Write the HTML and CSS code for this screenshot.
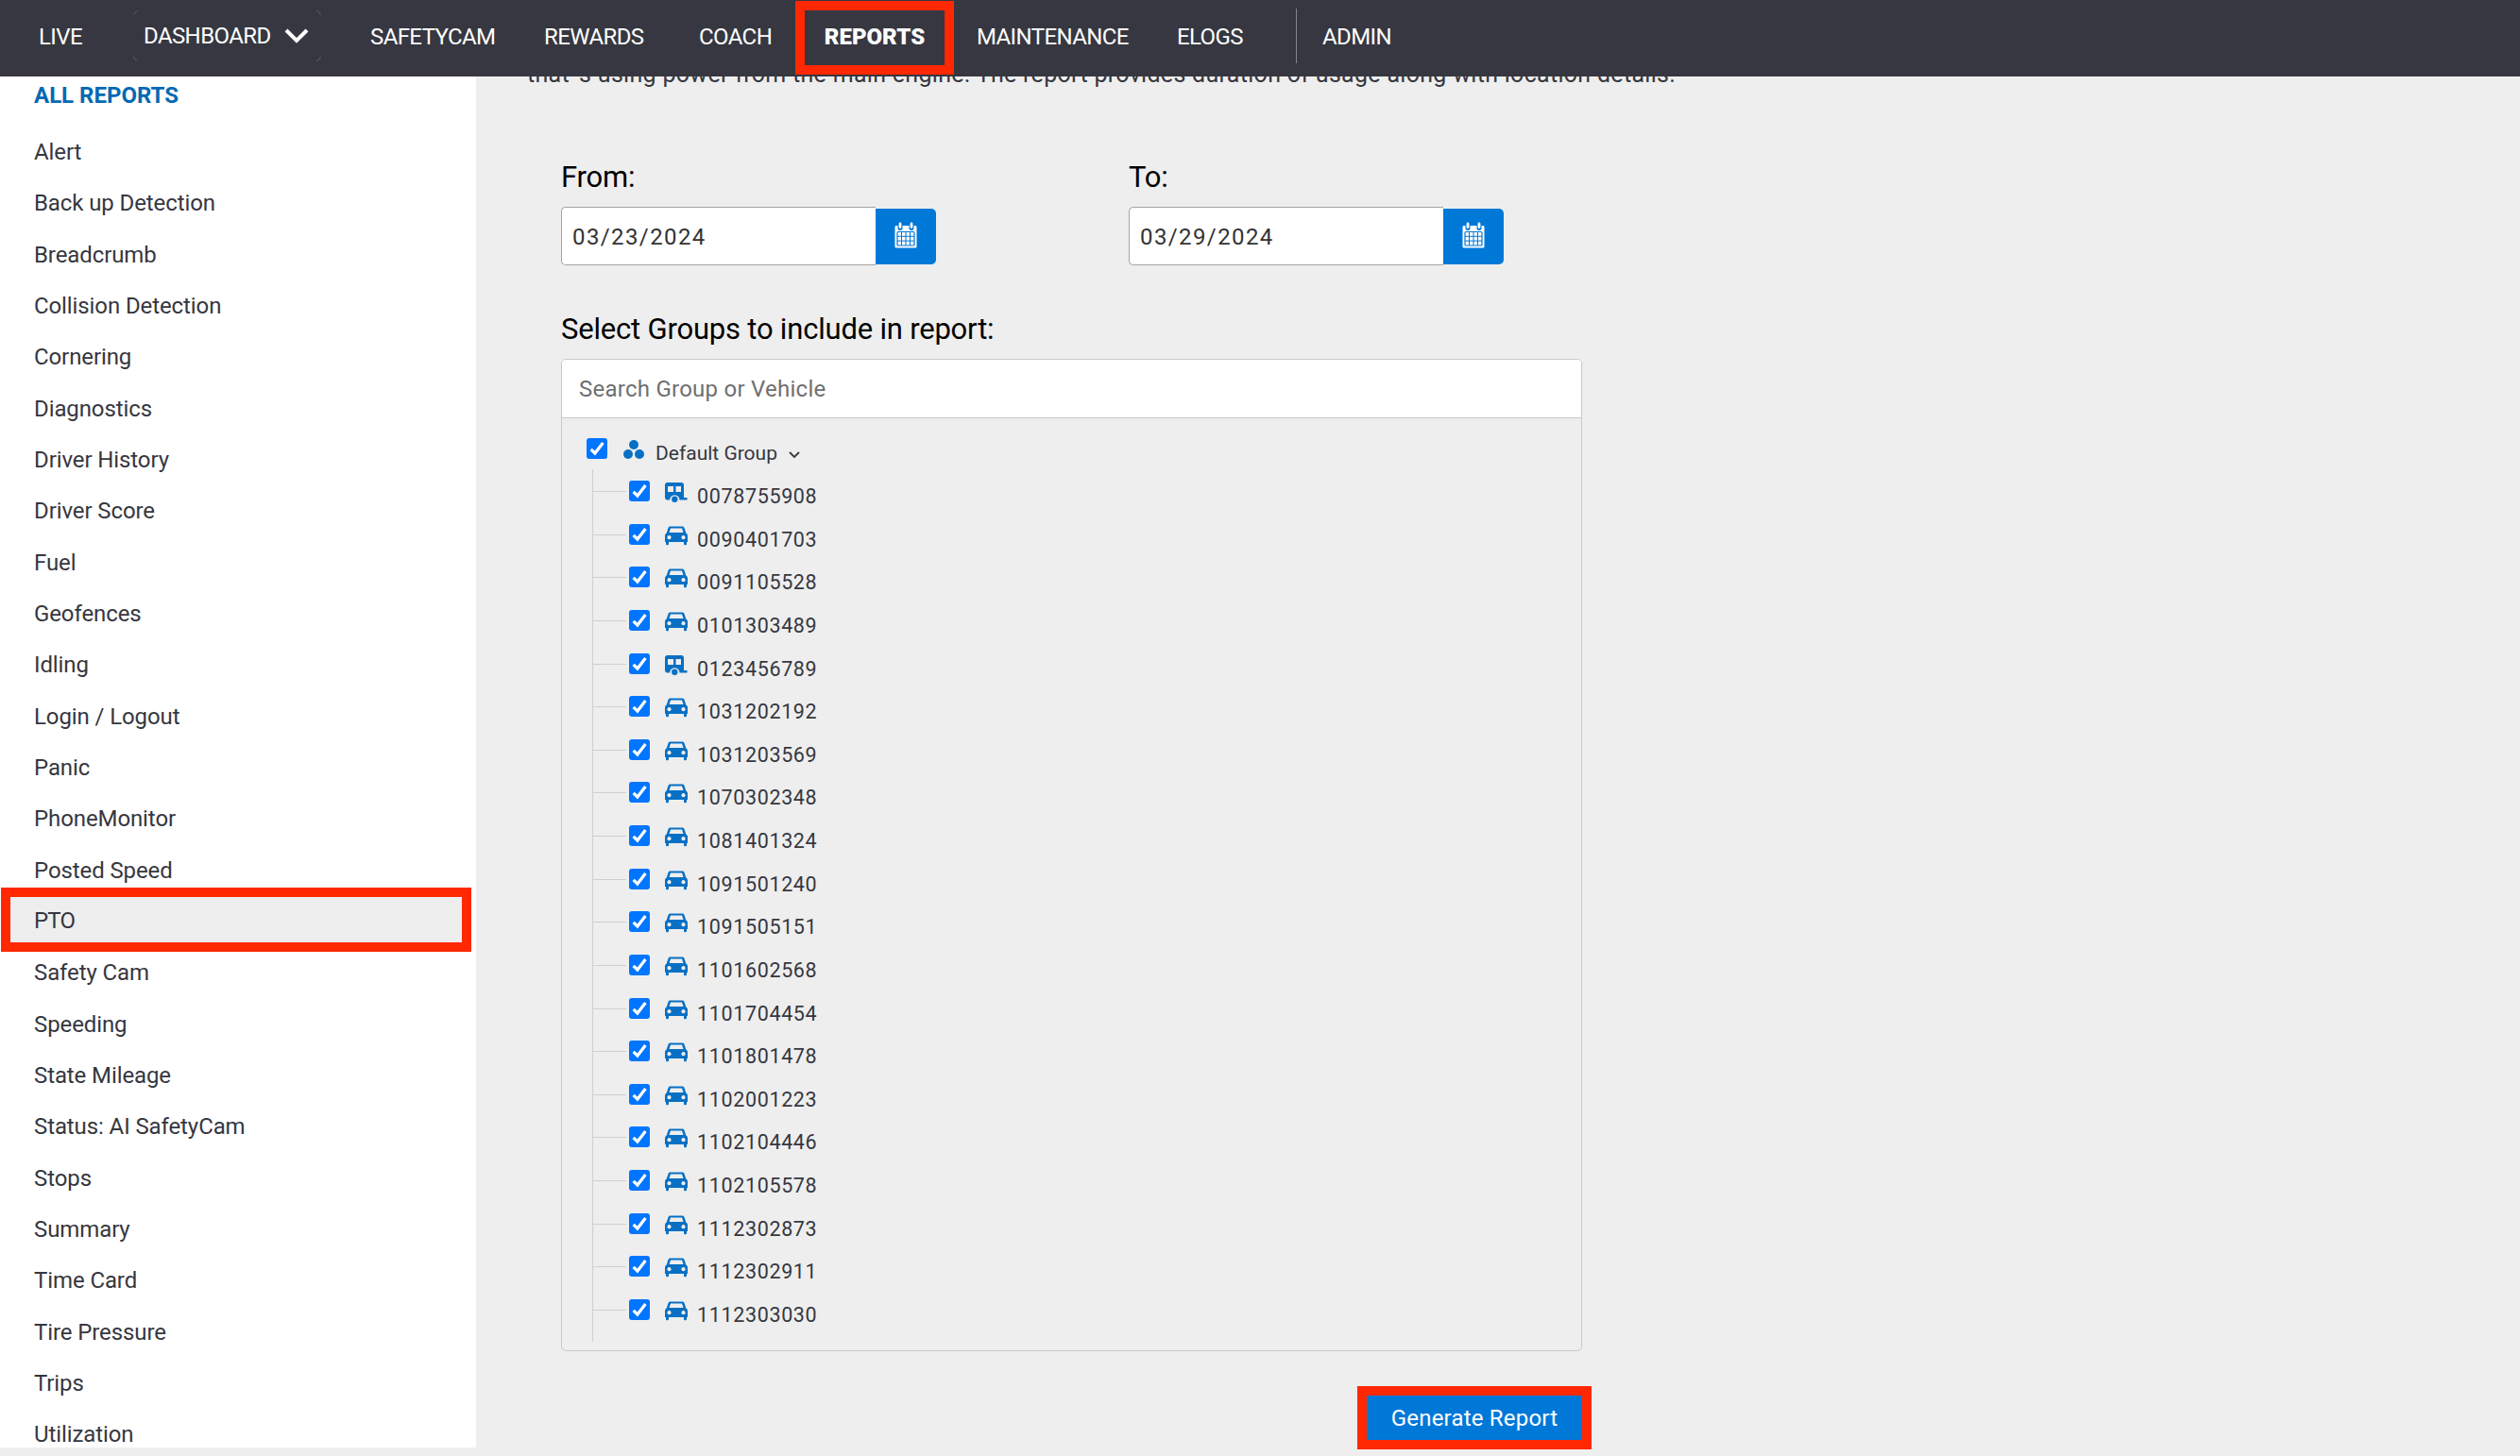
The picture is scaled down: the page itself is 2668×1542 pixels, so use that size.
FILE: index.html
```html
<!DOCTYPE html>
<html lang="en">

<head>
    <meta charset="UTF-8">
    <meta name="viewport" content="width=device-width, initial-scale=1.0">
    <title>Reports - PTO</title>
    <link rel="stylesheet" href="styles.css">
</head>

<body>
    <!-- Icons -->
    <svg class="sprite" width="0" height="0">
        <symbol id="check" viewBox="0 0 22 22">
            <rect width="22" height="22" rx="3" fill="#0075ff" />
            <path d="M4.6 11.8l4.3 4.2L17.4 5" fill="none" stroke="#fff" stroke-width="3.2" />
        </symbol>
        <symbol id="car" viewBox="0 0 24 20">
            <path fill-rule="evenodd" d="M5.6 0h12.8c1 0 1.8.6 2.1 1.5L22.3 7c1 .7 1.7 1.7 1.7 3v6.6h-1v1.6c0 1-.6 1.6-1.5 1.6S20 19.200 20 18.200v-1.600H4v1.600c0 1-.6 1.600-1.500 1.600S1 19.200 1 18.200v-1.600H0V10c0-1.300.7-2.300 1.700-3l1.800-5.500C3.800.6 4.600 0 5.600 0zM6 2L4.500 6.600h15L18 2zM4.500 9.600a2.100 2.100 0 1 0 .01 0zM19.500 9.600a2.100 2.100 0 1 0 .01 0z" />
        </symbol>
        <symbol id="trailer" viewBox="0 0 24 21">
            <path fill-rule="evenodd" d="M2.500 0h15C19 0 20 1 20 2.500V16h3.500v2.500h-8a5.200 5.200 0 0 0-10.400 0H2.500C1 18.500 0 17.500 0 16V2.500C0 1 1 0 2.500 0zM3 4v6h6V4zM11.500 4v6H17V4z" />
            <circle cx="10.300" cy="17.700" r="3.200" />
        </symbol>
        <symbol id="group" viewBox="0 0 22 20">
            <circle cx="11" cy="5" r="5" />
            <circle cx="5" cy="15" r="5" />
            <circle cx="17" cy="15" r="5" />
        </symbol>
        <symbol id="calendar" viewBox="0 0 24 28">
            <path fill="#fff" d="M2 4h20c1 0 1.500.6 1.500 1.500V26c0 1-.5 1.500-1.500 1.500H2c-1 0-1.500-.5-1.500-1.500V5.500C.5 4.600 1 4 2 4z" />
            <rect x="3" y="10.500" width="18" height="14.500" rx="1" fill="none" stroke="#0078d8" stroke-width="1.200" />
            <path d="M7.500 10.500V25M12 10.500V25M16.500 10.500V25M3 15.300h18M3 20.100h18" stroke="#0078d8" />
            <path d="M6 2v4.500M18 2v4.500" stroke="#0078d8" stroke-width="5" stroke-linecap="round" />
            <path d="M6 2v3.500M18 2v3.500" stroke="#fff" stroke-width="2.800" stroke-linecap="round" />
        </symbol>
    </svg>

    <!-- Navigation -->
    <header>
        <nav class="nav-links">
            <a>LIVE</a>
            <a class="dropdown">DASHBOARD
                <svg class="arrow" viewBox="0 0 26 16"><path d="M2 2l11 11L24 2" /></svg>
            </a>
            <a>SAFETYCAM</a>
            <a>REWARDS</a>
            <a>COACH</a>
            <a class="active">REPORTS</a>
            <a>MAINTENANCE</a>
            <a>ELOGS</a>
            <a class="admin">ADMIN</a>
        </nav>
    </header>

    <div class="page">
        <!-- Report list -->
        <aside class="sidebar">
            <h2>ALL REPORTS</h2>
            <ul>
                <li>Alert</li>
                <li>Back up Detection</li>
                <li>Breadcrumb</li>
                <li>Collision Detection</li>
                <li>Cornering</li>
                <li>Diagnostics</li>
                <li>Driver History</li>
                <li>Driver Score</li>
                <li>Fuel</li>
                <li>Geofences</li>
                <li>Idling</li>
                <li>Login / Logout</li>
                <li>Panic</li>
                <li>PhoneMonitor</li>
                <li>Posted Speed</li>
                <li class="selected">PTO</li>
                <li>Safety Cam</li>
                <li>Speeding</li>
                <li>State Mileage</li>
                <li>Status: AI SafetyCam</li>
                <li>Stops</li>
                <li>Summary</li>
                <li>Time Card</li>
                <li>Tire Pressure</li>
                <li>Trips</li>
                <li>Utilization</li>
            </ul>
        </aside>

        <!-- Report form -->
        <main>
            <p class="description">that 's using power from the main engine. The report provides duration of usage along with location details.</p>

            <div class="dates">
                <div class="date-group">
                    <label for="from">From:</label>
                    <div class="date-field">
                        <input type="text" id="from" value="03/23/2024">
                        <button type="button"><svg><use href="#calendar" /></svg></button>
                    </div>
                </div>
                <div class="date-group">
                    <label for="to">To:</label>
                    <div class="date-field">
                        <input type="text" id="to" value="03/29/2024">
                        <button type="button"><svg><use href="#calendar" /></svg></button>
                    </div>
                </div>
            </div>

            <label class="groups-label" for="search">Select Groups to include in report:</label>
            <div class="groups">
                <input type="text" id="search" placeholder="Search Group or Vehicle">
                <div class="tree">
                    <div class="tree-root">
                        <svg class="check"><use href="#check" /></svg>
                        <svg class="icon"><use href="#group" /></svg>
                        <span>Default Group</span>
                        <svg class="caret" viewBox="0 0 12 8"><path d="M1 1l5 5 5-5" /></svg>
                    </div>
                    <ul>
                        <li><svg class="check"><use href="#check" /></svg><svg class="icon"><use href="#trailer" /></svg><span>0078755908</span></li>
                        <li><svg class="check"><use href="#check" /></svg><svg class="icon"><use href="#car" /></svg><span>0090401703</span></li>
                        <li><svg class="check"><use href="#check" /></svg><svg class="icon"><use href="#car" /></svg><span>0091105528</span></li>
                        <li><svg class="check"><use href="#check" /></svg><svg class="icon"><use href="#car" /></svg><span>0101303489</span></li>
                        <li><svg class="check"><use href="#check" /></svg><svg class="icon"><use href="#trailer" /></svg><span>0123456789</span></li>
                        <li><svg class="check"><use href="#check" /></svg><svg class="icon"><use href="#car" /></svg><span>1031202192</span></li>
                        <li><svg class="check"><use href="#check" /></svg><svg class="icon"><use href="#car" /></svg><span>1031203569</span></li>
                        <li><svg class="check"><use href="#check" /></svg><svg class="icon"><use href="#car" /></svg><span>1070302348</span></li>
                        <li><svg class="check"><use href="#check" /></svg><svg class="icon"><use href="#car" /></svg><span>1081401324</span></li>
                        <li><svg class="check"><use href="#check" /></svg><svg class="icon"><use href="#car" /></svg><span>1091501240</span></li>
                        <li><svg class="check"><use href="#check" /></svg><svg class="icon"><use href="#car" /></svg><span>1091505151</span></li>
                        <li><svg class="check"><use href="#check" /></svg><svg class="icon"><use href="#car" /></svg><span>1101602568</span></li>
                        <li><svg class="check"><use href="#check" /></svg><svg class="icon"><use href="#car" /></svg><span>1101704454</span></li>
                        <li><svg class="check"><use href="#check" /></svg><svg class="icon"><use href="#car" /></svg><span>1101801478</span></li>
                        <li><svg class="check"><use href="#check" /></svg><svg class="icon"><use href="#car" /></svg><span>1102001223</span></li>
                        <li><svg class="check"><use href="#check" /></svg><svg class="icon"><use href="#car" /></svg><span>1102104446</span></li>
                        <li><svg class="check"><use href="#check" /></svg><svg class="icon"><use href="#car" /></svg><span>1102105578</span></li>
                        <li><svg class="check"><use href="#check" /></svg><svg class="icon"><use href="#car" /></svg><span>1112302873</span></li>
                        <li><svg class="check"><use href="#check" /></svg><svg class="icon"><use href="#car" /></svg><span>1112302911</span></li>
                        <li><svg class="check"><use href="#check" /></svg><svg class="icon"><use href="#car" /></svg><span>1112303030</span></li>
                    </ul>
                </div>
            </div>

            <button type="button" class="btn-generate">Generate Report</button>
        </main>
    </div>
</body>

</html>
```

FILE: styles.css
```css
* {
    margin: 0;
    padding: 0;
    box-sizing: border-box;
    font-family: Roboto, 'Liberation Sans', sans-serif;
}

:root {
    --dark: #363740;
    --page: #eeeeee;
    --blue: #0078d8;
    --link: #0369b3;
    --icon: #0870c4;
    --mark: #ff2800;
    --line: #c8c8c8;
}

body {
    height: 1542px;
    overflow: hidden;
    background-color: var(--page);
    color: var(--dark);
    font-size: 24px;
}

ul {
    list-style: none;
}

.sprite {
    display: block;
}

/* Navigation */
header {
    height: 81px;
    background-color: var(--dark);
}

.nav-links {
    display: grid;
    grid-template-columns: 100px 251px 184px 164px 102px 192px 212px 126px 200px;
    padding-left: 41px;
    height: 81px;
}

.nav-links a {
    color: #fff;
    line-height: 78px;
    letter-spacing: -0.6px;
    white-space: nowrap;
}

.nav-links .dropdown {
    display: flex;
    align-items: center;
    gap: 14px;
    width: 199px;
    height: 54px;
    margin-top: 11px;
    padding-left: 10px;
    border: 1px solid #5c5d65;
    border-radius: 6px;
    line-height: 54px;
    position: relative;
    isolation: isolate;
}

/* leave only the rounded corners of the border visible */
.dropdown::before,
.dropdown::after {
    content: '';
    position: absolute;
    z-index: -1;
    background-color: var(--dark);
}

.dropdown::before {
    top: -1px;
    bottom: -1px;
    left: 4px;
    right: 4px;
}

.dropdown::after {
    top: 4px;
    bottom: 4px;
    left: -1px;
    right: -1px;
}

.arrow {
    width: 26px;
    height: 16px;
    fill: none;
    stroke: #fff;
    stroke-width: 4;
}

.nav-links .active {
    width: 168px;
    height: 78px;
    margin-top: 1px;
    border: 10px solid var(--mark);
    line-height: 56px;
    text-align: center;
    font-weight: 900;
    letter-spacing: 0;
}

.nav-links .admin {
    height: 58px;
    margin-top: 9px;
    padding-left: 27px;
    border-left: 1px solid #85868c;
    line-height: 60px;
}

.page {
    display: flex;
    height: 1461px;
}

/* Report list */
.sidebar {
    width: 504px;
    height: 1452px;
    overflow: hidden;
    background-color: #fff;
}

.sidebar h2 {
    height: 51px;
    padding-left: 36px;
    line-height: 40px;
    color: var(--link);
    font-size: 24px;
    font-weight: bold;
}

.sidebar li {
    height: 54.34px;
    padding-left: 36px;
    line-height: 58px;
    letter-spacing: -0.1px;
}

.sidebar .selected {
    width: 498px;
    height: 68px;
    margin: -7px 0 -6.66px 1px;
    padding-left: 25px;
    border: 10px solid var(--mark);
    background-color: var(--page);
    line-height: 50px;
    letter-spacing: -0.8px;
    position: relative;
}

/* Report form */
main {
    flex: 1;
    padding-left: 90px;
    overflow: hidden;
}

.description {
    height: 85px;
    margin: -16px 0 0 -36px;
    line-height: 28px;
    font-size: 25px;
    letter-spacing: 0.3px;
    white-space: nowrap;
}

.dates {
    display: flex;
}

.date-group {
    width: 601px;
}

label {
    display: block;
    color: #000;
    font-size: 31px;
    letter-spacing: -0.2px;
    font-weight: 400;
    line-height: 76px;
}

.date-field {
    display: flex;
    align-items: center;
    height: 62px;
    margin-top: -7px;
}

.date-field input {
    width: 333px;
    height: 62px;
    padding: 2px 0 0 11px;
    border: 1px solid #a4a4a4;
    border-right: none;
    border-radius: 5px 0 0 5px;
    color: #333;
    font-size: 24px;
    letter-spacing: 1.4px;
}

.date-field button {
    display: flex;
    align-items: center;
    justify-content: center;
    width: 64px;
    height: 59px;
    padding-bottom: 3px;
    border: none;
    border-radius: 0 5px 5px 0;
    background-color: var(--blue);
}

.date-field svg {
    width: 24px;
    height: 28px;
}

.groups-label {
    height: 68px;
    margin-top: 31px;
    line-height: 73px;
}

.groups {
    width: 1081px;
    height: 1051px;
    border: 1px solid var(--line);
    border-radius: 5px;
}

.groups input {
    display: block;
    width: 100%;
    height: 62px;
    padding-left: 18px;
    border: none;
    border-bottom: 1px solid var(--line);
    border-radius: 4px 4px 0 0;
    font-size: 24px;
    letter-spacing: 0.25px;
}

.groups input::placeholder {
    color: #6f6f6f;
}

.tree {
    padding: 21px 0 0 26px;
    font-size: 21px;
}

.tree-root {
    display: flex;
    height: 33px;
}

.check {
    width: 22px;
    height: 22px;
}

.icon {
    fill: var(--icon);
}

.tree-root .icon {
    width: 22px;
    height: 20px;
    margin: 2px 12px 0 17px;
}

.tree-root span {
    line-height: 33px;
}

.caret {
    width: 12px;
    height: 8px;
    margin: 14px 0 0 12px;
    fill: none;
    stroke: var(--dark);
    stroke-width: 1.8;
}

.tree ul {
    height: 924px;
    margin-left: 6px;
    padding-top: 12px;
    border-left: 1px solid #cfcfcf;
}

.tree li {
    display: flex;
    height: 45.63px;
}

/* branch from the trunk to the checkbox */
.tree li::before {
    content: '';
    width: 35px;
    height: 1px;
    margin: 11px 3px 0 0;
    background-color: #cfcfcf;
}

.tree li .icon {
    width: 24px;
    height: 21px;
    margin: 2px 10px 0 16px;
}

.tree li span {
    line-height: 34px;
    font-size: 21.5px;
    letter-spacing: 0.65px;
}

.btn-generate {
    display: block;
    width: 248px;
    height: 67px;
    margin: 37px 0 0 843px;
    border: 10px solid var(--mark);
    background-color: var(--blue);
    color: #fff;
    font-size: 24px;
    letter-spacing: 0.2px;
}
```
